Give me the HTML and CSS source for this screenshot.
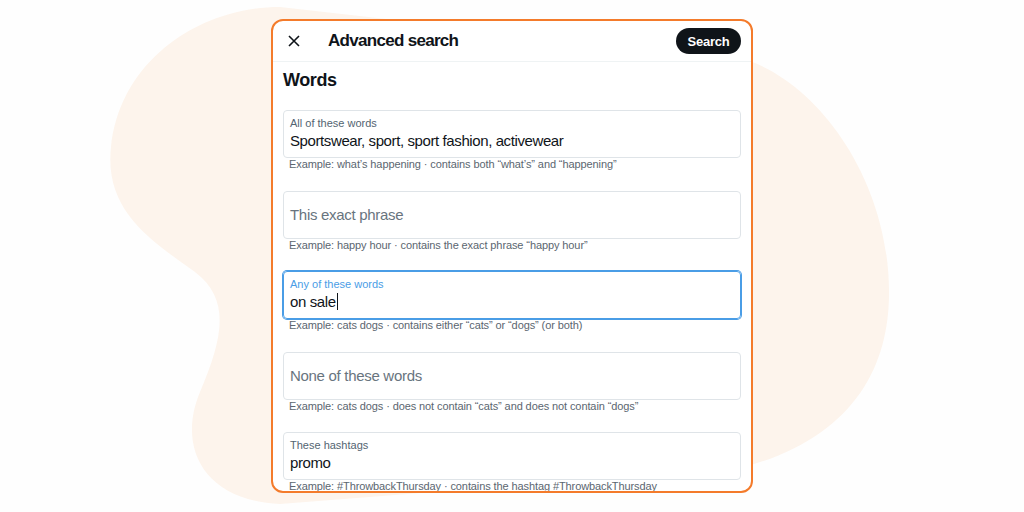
FILE: index.html
```html
<!DOCTYPE html>
<html lang="en">

<head>
    <meta charset="UTF-8">
    <meta name="viewport" content="width=device-width, initial-scale=1.0">
    <title>Advanced search</title>
    <link rel="stylesheet" href="styles.css">
</head>

<body>

    <svg class="blob" viewBox="0 0 1024 512" aria-hidden="true">
        <path d="M280 7 C200 7 120 60 111 147 C104 210 150 240 195 272 C232 300 222 340 200 392 C178 444 200 500 280 504 L740 468 C850 440 890 370 889 290 C888 180 820 85 747 60 Z" />
    </svg>

    <div class="stage">
        <div class="card">
            <nav class="header">
                <button class="close-btn">
                    <svg viewBox="0 0 20 20" width="20" height="20">
                        <path d="M5 5 L15 15 M15 5 L5 15" />
                    </svg>
                </button>
                <h1>Advanced search</h1>
                <button class="search-btn">Search</button>
            </nav>

            <main>
                <h2>Words</h2>

                <div class="field">
                    <div class="box">
                        <span class="label">All of these words</span>
                        <span class="value">Sportswear, sport, sport fashion, activewear</span>
                    </div>
                    <p class="hint">Example: what’s happening · contains both “what’s” and “happening”</p>
                </div>

                <div class="field">
                    <div class="box empty">
                        <span class="placeholder">This exact phrase</span>
                    </div>
                    <p class="hint">Example: happy hour · contains the exact phrase “happy hour”</p>
                </div>

                <div class="field">
                    <div class="box focus">
                        <span class="label">Any of these words</span>
                        <span class="value">on sale<span class="caret"></span></span>
                    </div>
                    <p class="hint">Example: cats dogs · contains either “cats” or “dogs” (or both)</p>
                </div>

                <div class="field">
                    <div class="box empty">
                        <span class="placeholder">None of these words</span>
                    </div>
                    <p class="hint">Example: cats dogs · does not contain “cats” and does not contain “dogs”</p>
                </div>

                <div class="field">
                    <div class="box">
                        <span class="label">These hashtags</span>
                        <span class="value">promo</span>
                    </div>
                    <p class="hint">Example: #ThrowbackThursday · contains the hashtag #ThrowbackThursday</p>
                </div>
            </main>
        </div>
    </div>

</body>

</html>
```

FILE: styles.css
```css
body,
html {
    margin: 0;
    padding: 0;
}

body {
    width: 1024px;
    height: 512px;
    overflow: hidden;
    position: relative;
    background-color: #fefefe;
    color: #0f1419;
    font-family: "Liberation Sans", Arial, sans-serif;
}

.blob {
    position: absolute;
    top: 0;
    left: 0;
    width: 1024px;
    height: 512px;
}

.blob path {
    fill: #fdf4ec;
}

.stage {
    position: relative;
    display: flex;
    justify-content: center;
    padding-top: 19px;
}

.card {
    width: 482px;
    height: 474px;
    box-sizing: border-box;
    border: 2px solid #f47b2b;
    border-radius: 12px;
    background-color: #fff;
    overflow: hidden;
}

.header {
    display: flex;
    align-items: center;
    height: 40px;
    padding: 0 10px 0 10px;
    border-bottom: 1px solid #eff3f4;
}

.close-btn {
    border: 0;
    background-color: transparent;
    padding: 0;
    width: 22px;
    height: 22px;
    display: flex;
    align-items: center;
    justify-content: center;
}

.close-btn path {
    stroke: #0f1419;
    stroke-width: 1.6;
    fill: none;
}

.header h1 {
    margin: 0 0 0 23px;
    font-size: 17px;
    font-weight: bold;
    letter-spacing: -0.7px;
    flex: 1;
}

.search-btn {
    border: 0;
    background-color: #0f1419;
    color: #fff;
    font-family: inherit;
    font-size: 13px;
    font-weight: bold;
    letter-spacing: -0.2px;
    height: 26px;
    width: 65px;
    border-radius: 13px;
}

main {
    padding: 7px 10px 0 10px;
}

h2 {
    margin: 0 0 19px 0;
    font-size: 18px;
    line-height: 22px;
    letter-spacing: -0.4px;
}

.field {
    margin-bottom: 19.5px;
}

.box {
    box-sizing: border-box;
    height: 48px;
    border: 1px solid #dfe4e8;
    border-radius: 4px;
    padding: 5px 6px 0 6px;
    display: flex;
    flex-direction: column;
}

.box.empty {
    padding-top: 0;
    justify-content: center;
}

.box.focus {
    border-color: #4a9de6;
    box-shadow: 0 0 0 1px #4a9de6;
}

.label {
    font-size: 11px;
    line-height: 14px;
    color: #536471;
    margin-bottom: 1px;
}

.focus .label {
    color: #4a9de6;
}

.value {
    font-size: 15px;
    line-height: 20px;
    letter-spacing: -0.4px;
}

.placeholder {
    font-size: 15px;
    line-height: 20px;
    color: #68747e;
    letter-spacing: -0.3px;
}

.caret {
    display: inline-block;
    width: 1px;
    height: 17px;
    margin-left: 1px;
    background-color: #0f1419;
    vertical-align: -3px;
}

.hint {
    margin: 0 0 0 6px;
    font-size: 11px;
    line-height: 13px;
    color: #5b6670;
    letter-spacing: -0.1px;
}
```
